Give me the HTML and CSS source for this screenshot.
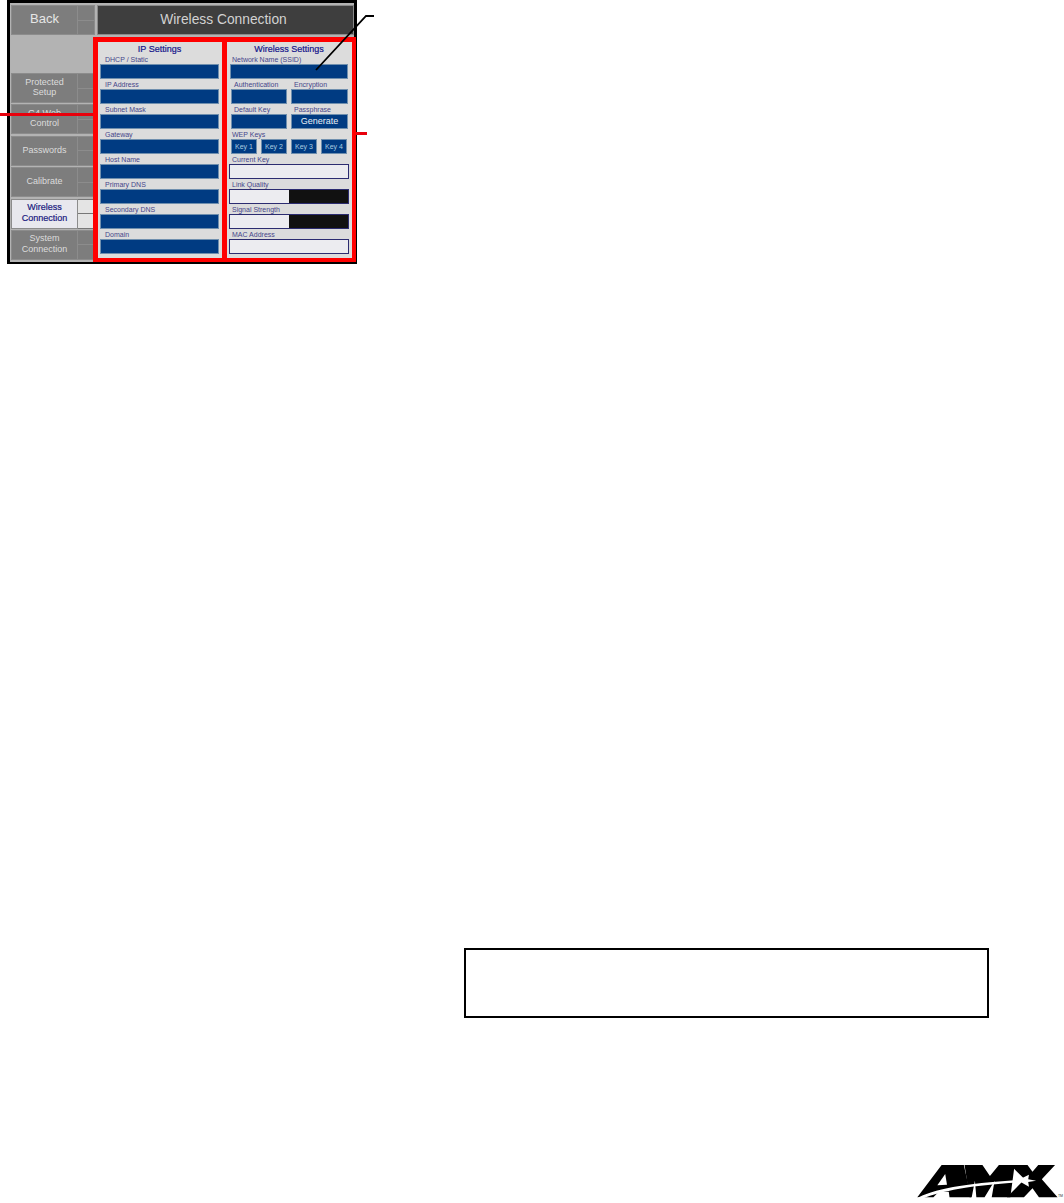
FILE: index.html
```html
<!DOCTYPE html>
<html>
<head>
  <meta charset="UTF-8">
  <title>Wireless Connection</title>
  <link rel="stylesheet" href="styles.css">
</head>
<body>

  <div class="figure">
    <div class="panel">
      <div class="topbar">
        <div class="btn back"><span class="btn-main">Back</span><span class="btn-side"><i></i><i></i></span></div>
        <div class="title">Wireless Connection</div>
      </div>
      <div class="content">
        <div class="sidebar">
          <div class="btn"><span class="btn-main">Protected<br>Setup</span><span class="btn-side"><i></i><i></i></span></div>
          <div class="btn"><span class="btn-main">G4 Web<br>Control</span><span class="btn-side"><i></i><i></i></span></div>
          <div class="btn"><span class="btn-main">Passwords</span><span class="btn-side"><i></i><i></i></span></div>
          <div class="btn"><span class="btn-main">Calibrate</span><span class="btn-side"><i></i><i></i></span></div>
          <div class="btn active"><span class="btn-main">Wireless<br>Connection</span><span class="btn-side"><i></i><i></i></span></div>
          <div class="btn"><span class="btn-main">System<br>Connection</span><span class="btn-side"><i></i><i></i></span></div>
        </div>

        <div class="group ip">
          <h2>IP Settings</h2>
          <label>DHCP / Static</label><div class="field"></div>
          <label>IP Address</label><div class="field"></div>
          <label>Subnet Mask</label><div class="field"></div>
          <label>Gateway</label><div class="field"></div>
          <label>Host Name</label><div class="field"></div>
          <label>Primary DNS</label><div class="field"></div>
          <label>Secondary DNS</label><div class="field"></div>
          <label>Domain</label><div class="field"></div>
        </div>

        <div class="group wifi">
          <h2>Wireless Settings</h2>
          <label>Network Name (SSID)</label><div class="field wide"></div>
          <div class="pair">
            <div><label>Authentication</label><div class="field"></div></div>
            <div><label>Encryption</label><div class="field"></div></div>
          </div>
          <div class="pair">
            <div><label>Default Key</label><div class="field"></div></div>
            <div><label>Passphrase</label><div class="field generate">Generate</div></div>
          </div>
          <label>WEP Keys</label>
          <div class="keys">
            <div class="field key">Key 1</div>
            <div class="field key">Key 2</div>
            <div class="field key">Key 3</div>
            <div class="field key">Key 4</div>
          </div>
          <label>Current Key</label><div class="readout"></div>
          <label>Link Quality</label><div class="readout meter"><span></span></div>
          <label>Signal Strength</label><div class="readout meter"><span></span></div>
          <label>MAC Address</label><div class="readout"></div>
        </div>
      </div>
    </div>

    <div class="callout-left"></div>
    <div class="callout-right"></div>
    <svg class="callout-line" width="70" height="70" viewBox="0 0 70 70">
      <polyline points="2,56 52,2 60,2" fill="none" stroke="#000" stroke-width="1.8"/>
    </svg>
  </div>

  <div class="note"></div>

  <div class="footer">
    <svg class="logo" width="161" height="43" viewBox="0 0 450 129" preserveAspectRatio="none">
      <!-- letters first, then the white swoosh and star cut across them -->
      <path d="M40 112 L108 15 H170 L190 112 H130 L128 95 H100 L85 112Z"/>
      <path d="M172 15 H222 L243 48 L268 15 H312 L300 112 H248 L256 62 L228 112 H205 L201 62 L192 112 H186Z"/>
      <path d="M300 15 H348 L362 35 L378 15 H425 L388 58 L432 112 H380 L362 85 L338 112 H290 L340 58Z"/>
      <path fill="#fff" d="M96 76 L118 42 L123 74Z"/>
      <path fill="#fff" d="M36 116 C85 88 170 70 322 60 L352 44 L350 58 L372 62 L350 66 L352 80 L330 67 C190 76 110 92 54 116Z"/>
      <text x="433" y="112" font-size="10" fill="#333">TM</text>
    </svg>
  </div>

</body>
</html>
```

FILE: styles.css
```css
html, body { margin: 0; padding: 0; background: #fff; font-family: "Liberation Sans", Arial, sans-serif; }
body { height: 1203px; overflow: hidden; }

.figure { position: relative; height: 264px; }
.panel { box-sizing: border-box; width: 350px; height: 264px; margin-left: 7px; border: 3px solid #000; border-bottom-width: 2px; background: #b3b3b3; padding-top: 2px; }

.topbar { display: flex; height: 30px; margin-left: 1px; gap: 2px; }
.title { width: 257px; background: #3e3e3e; border: 1px solid #8a8a8a; box-sizing: border-box; padding-right: 4px; color: #d2d2d2; font-size: 13.8px; line-height: 28px; text-align: center; }

.btn { display: flex; width: 84px; height: 30px; flex: none; background: #7d7d7d; color: #dcdcdc; font-size: 9px; line-height: 10.5px; text-align: center; }
.btn-main { flex: 1; display: flex; flex-direction: column; justify-content: center; box-sizing: border-box; border: 1px solid #8c8c8c; padding-bottom: 2px; }
.btn-side { width: 17px; display: flex; flex-direction: column; }
.btn-side i { flex: 1; border: 1px solid #8c8c8c; border-left: 0; }
.btn-side i + i { border-top: 0; }
.back { font-size: 13px; }
.back .btn-main { color: #e6e6e6; }
.active .btn-main { background: #e8e8ee; color: #1a1a80; -webkit-text-stroke: 0.2px #1a1a80; }
.active .btn-side i { background: #e4e4e4; border-color: #777; }

.content { display: flex; margin-left: 1px; margin-top: 2px; }
.sidebar { display: flex; flex-direction: column; gap: 1.4px; width: 82px; padding-top: 36px; flex: none; }

.group { box-sizing: border-box; flex: none; height: 225px; background: #dcdcdc; border: 5px solid #f00; border-bottom-width: 4px; color: #46468a; }
.group h2 { margin: 3px 0 0; font-size: 9px; font-weight: 400; line-height: 9px; text-align: center; color: #14148a; -webkit-text-stroke: 0.2px #14148a; }
.group label { display: block; height: 10px; font-size: 7px; line-height: 12px; }
.ip { width: 134px; padding: 0 3px 0 2px; }
.ip label { padding-left: 5px; }
.wifi { width: 129px; border-left: 0; border-right-width: 4px; padding: 0 3px 0 2px; }
.wifi label { padding-left: 3px; }

.field { box-sizing: border-box; height: 15px; background: #003b82; border: 1px solid #6f8fae; color: #e8eef4; text-align: center; }
.wifi .wide { margin: 0 1px; }
.pair { display: flex; gap: 4px; margin: 0 1px 0 2px; }
.pair > div { width: 56px; }
.pair > div + div { width: 57px; }
.generate { font-size: 9px; line-height: 13px; }
.keys { display: flex; gap: 4px; margin: 0 2px; }
.key { flex: 1; font-size: 7px; line-height: 13px; color: #a8cde0; }

.readout { box-sizing: border-box; height: 15px; background: #ececf0; border: 1px solid #2c2c70; }
.meter { display: flex; justify-content: flex-end; }
.meter span { width: 59px; background: #111; }

.callout-left { position: absolute; left: 0; top: 113px; width: 93px; height: 3px; background: #e8000c; }
.callout-right { position: absolute; left: 356px; top: 132px; width: 11px; height: 3px; background: #e8000c; }
.callout-line { position: absolute; left: 314px; top: 14px; }

.note { box-sizing: border-box; width: 525px; height: 70px; margin: 684px 0 0 464px; border: 2px solid #000; }

.footer { display: flex; justify-content: flex-end; padding-top: 142px; }
.logo { display: block; }
```
